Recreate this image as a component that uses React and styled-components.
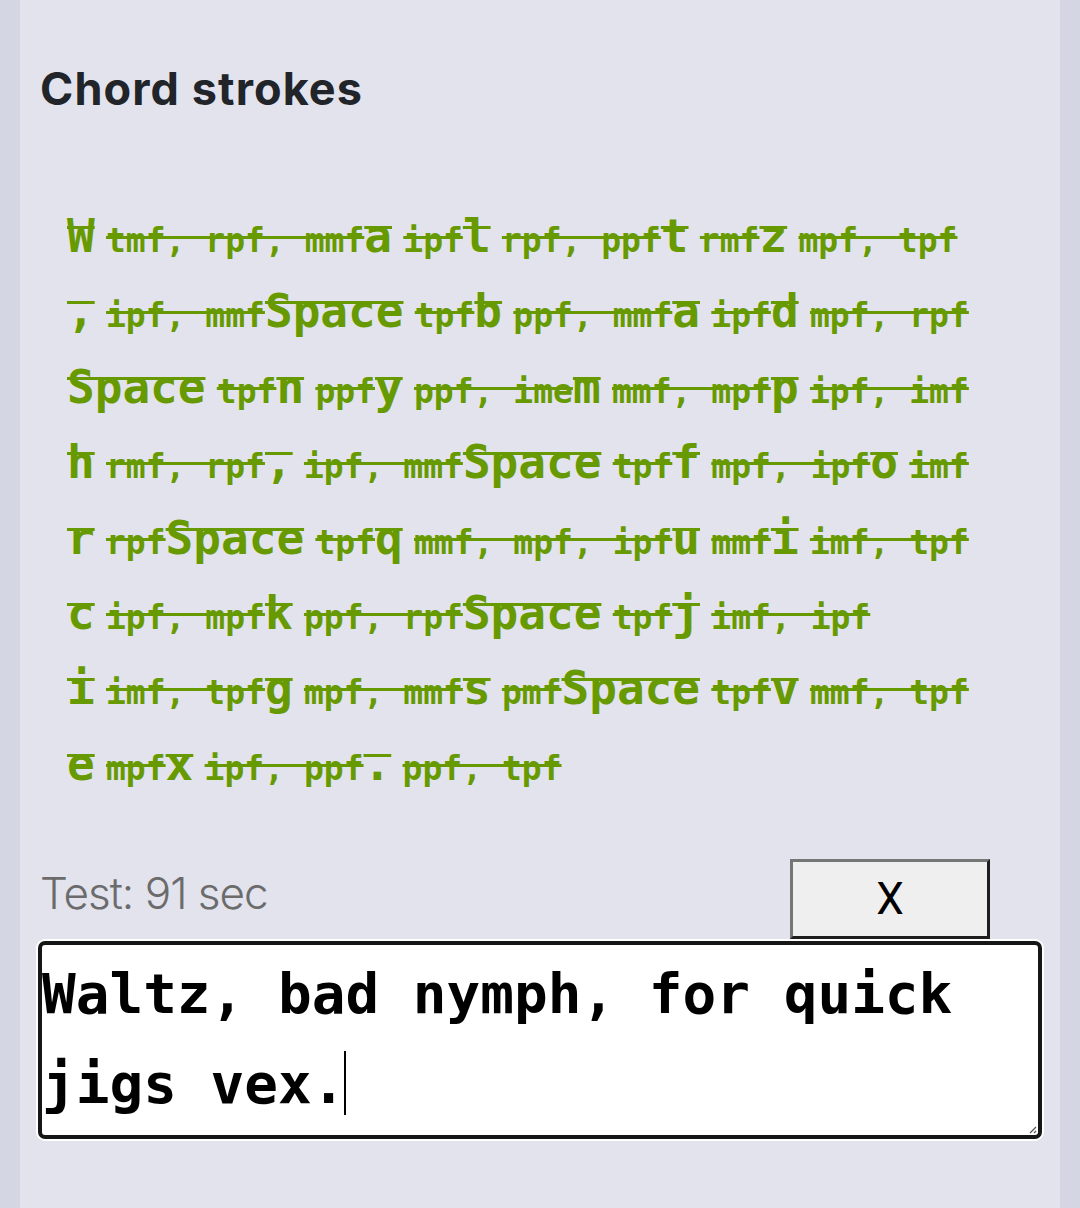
import React from "react";
import styled, { createGlobalStyle } from "styled-components";

const GlobalStyle = createGlobalStyle`
  html, body {
    margin: 0;
    padding: 0;
    background: #d4d6e4;
  }
  body {
    font-family: Inter, "Noto Sans", sans-serif;
  }
`;

const Panel = styled.main`
  margin: 0 20px;
  min-height: 1208px;
  box-sizing: border-box;
  background: #e2e3ed;
  padding: 66px 20px 0;
`;

const Heading = styled.h2`
  margin: 0 0 88px;
  font-family: Inter, "Noto Sans", sans-serif;
  font-weight: 700;
  font-size: 45px;
  line-height: 45px;
  letter-spacing: 1.1px;
  color: #212429;
`;

const Chords = styled.div`
  display: flex;
  flex-wrap: wrap;
  padding-left: 27px;
  color: #679a00;
  font-family: "DejaVu Sans Mono", monospace;
  font-weight: 700;
`;

const Item = styled.span`
  display: block;
  white-space: nowrap;
  font-size: 46px;
  line-height: 75.4px;
`;

const Glyph = styled.span`
  font-size: 46px;
  margin-right: 11.3px;
  text-decoration: underline;
  text-decoration-thickness: 3px;
  text-underline-offset: -26px;
  text-decoration-skip-ink: none;
`;

const Strokes = styled.span`
  font-size: 33px;
  line-height: 33px;
  text-decoration: underline;
  text-decoration-thickness: 3px;
  text-underline-offset: -15.5px;
  text-decoration-skip-ink: none;
`;

const Status = styled.div`
  display: flex;
  justify-content: space-between;
  align-items: flex-start;
  margin-top: 57px;
  padding-right: 50px;
`;

const Timer = styled.span`
  margin-top: 12px;
  font-family: Inter, "Noto Sans", sans-serif;
  font-weight: 300;
  font-size: 44px;
  line-height: 44px;
  letter-spacing: -1px;
  color: #6b6b6b;
`;

const CloseButton = styled.button`
  width: 200px;
  height: 80px;
  box-sizing: border-box;
  padding: 0;
  border: 3px solid;
  border-color: #767676 #1e1e1e #1e1e1e #767676;
  background: #efefef;
  color: #000;
  font-family: Roboto, "Liberation Sans", sans-serif;
  font-size: 44px;
  font-weight: 400;
  line-height: 1;
`;

const InputBox = styled.div`
  position: relative;
  margin: 2px -2px 0;
  height: 198px;
  box-sizing: border-box;
  padding: 4px 0 0;
  border: 4px solid #161616;
  border-radius: 7px;
  box-shadow: 0 0 0 2px #ffffff;
  background: #ffffff;
  color: #000;
  font-family: "DejaVu Sans Mono", monospace;
  font-weight: 700;
  font-size: 56px;
  line-height: 90px;
  white-space: pre-wrap;
`;

const Caret = styled.span`
  display: inline-block;
  width: 2px;
  height: 64px;
  margin-left: -1px;
  vertical-align: -12px;
  background: #000;
`;

const Grip = styled.svg`
  position: absolute;
  right: 1px;
  bottom: 1px;
`;

const chords = [
  ["W", "tmf, rpf, mmf"],
  ["a", "ipf"],
  ["l", "rpf, ppf"],
  ["t", "rmf"],
  ["z", "mpf, tpf"],
  [",", "ipf, mmf"],
  ["Space", "tpf"],
  ["b", "ppf, mmf"],
  ["a", "ipf"],
  ["d", "mpf, rpf"],
  ["Space", "tpf"],
  ["n", "ppf"],
  ["y", "ppf, ime"],
  ["m", "mmf, mpf"],
  ["p", "ipf, imf"],
  ["h", "rmf, rpf"],
  [",", "ipf, mmf"],
  ["Space", "tpf"],
  ["f", "mpf, ipf"],
  ["o", "imf"],
  ["r", "rpf"],
  ["Space", "tpf"],
  ["q", "mmf, mpf, ipf"],
  ["u", "mmf"],
  ["i", "imf, tpf"],
  ["c", "ipf, mpf"],
  ["k", "ppf, rpf"],
  ["Space", "tpf"],
  ["j", "imf, ipf"],
  ["i", "imf, tpf"],
  ["g", "mpf, mmf"],
  ["s", "pmf"],
  ["Space", "tpf"],
  ["v", "mmf, tpf"],
  ["e", "mpf"],
  ["x", "ipf, ppf"],
  [".", "ppf, tpf"],
];

export default function App() {
  return (
    <>
      <GlobalStyle />
      <Panel>
        <Heading>Chord strokes</Heading>
        <Chords>
          {chords.map(([key, strokes], i) => (
            <Item key={i}>
              <Glyph>{key}</Glyph>
              <Strokes>{strokes}</Strokes>
            </Item>
          ))}
        </Chords>
        <Status>
          <Timer>Test: 91 sec</Timer>
          <CloseButton type="button">X</CloseButton>
        </Status>
        <InputBox role="textbox" aria-multiline="true">
          Waltz, bad nymph, for quick jigs vex.<Caret />
          <Grip width="10" height="10" viewBox="0 0 10 10">
            <path d="M9 3 L3 9 M9 7 L7 9" stroke="#555" strokeWidth="1.2" />
          </Grip>
        </InputBox>
      </Panel>
    </>
  );
}
